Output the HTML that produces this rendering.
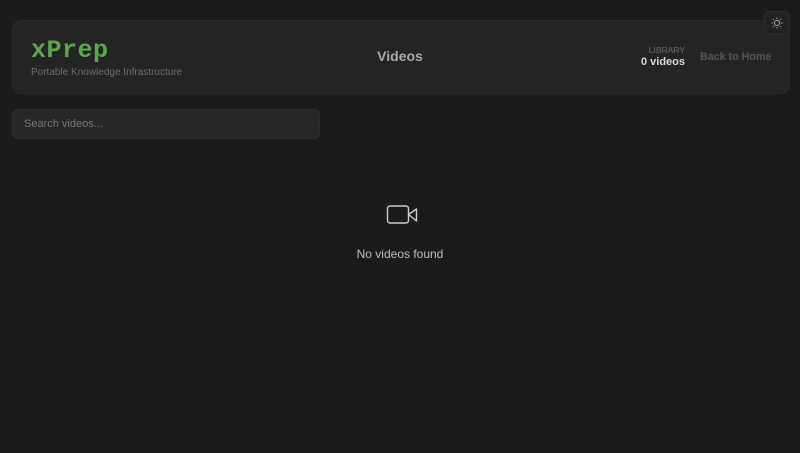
<!DOCTYPE html>
<html><head><style>
body{margin:0;width:800px;height:453px;background:#1b1b1b;font-family:"Liberation Sans",sans-serif;position:relative;overflow:hidden}
.card{position:absolute;left:12px;top:20px;width:776px;height:72px;background:#242424;border:1px solid #2c2c2c;border-radius:10px}
.logo{position:absolute;left:31px;top:36px;font-family:"Liberation Mono",monospace;font-size:25px;color:#5ea54f;letter-spacing:0.5px;font-weight:bold}
.sub{position:absolute;left:31px;top:67px;font-size:10px;color:#6e6e6e}
.title{position:absolute;left:0;width:800px;text-align:center;top:48px;font-size:14px;font-weight:bold;color:#a8a8a8}
.lib{position:absolute;left:632px;width:53px;text-align:right;top:45px;font-size:8.5px;color:#6a6a6a}
.cnt{position:absolute;left:620px;width:65px;text-align:right;top:56px;font-size:11px;font-weight:bold;color:#d8d8d8}
.back{position:absolute;left:700px;top:51px;font-size:10.7px;font-weight:bold;color:#555}
.theme{position:absolute;left:764px;top:11px;width:26px;height:24px;background:#222;border:1px solid #2e2e2e;border-radius:6px;box-sizing:border-box}
.search{position:absolute;left:12px;top:109px;width:308px;height:30px;background:#272727;border:1px solid #2e2e2e;border-radius:6px;box-sizing:border-box;font-size:11px;color:#777;padding:8px 0 0 11px}
.empty{position:absolute;left:0;width:800px;text-align:center;top:247px;font-size:12px;color:#bdbdbd}
</style></head><body>
<div class="card"></div>
<div class="logo">xPrep</div>
<div class="sub">Portable Knowledge Infrastructure</div>
<div class="title">Videos</div>
<div class="lib">LIBRARY</div>
<div class="cnt">0 videos</div>
<div class="back">Back to Home</div>
<div class="theme"><svg width="24" height="22" viewBox="0 0 24 22" style="position:absolute;left:0;top:0"><g stroke="#aaa" stroke-width="1" fill="none"><circle cx="12" cy="11" r="2.5"/><path d="M12 5.5v1.5M12 15v1.5M6.5 11H8M16 11h1.5M8.1 7.1l1 1M14.9 13.9l1 1M8.1 14.9l1-1M14.9 8.1l1-1"/></g></svg></div>
<div class="search">Search videos...</div>
<svg style="position:absolute;left:385px;top:202px" width="34" height="26" viewBox="0 0 34 26"><g stroke="#ccc" stroke-width="1.4" fill="none" stroke-linejoin="round"><rect x="2.5" y="4" width="21" height="17" rx="2.5"/><path d="M23.5 12.5L31.5 7v12z"/></g></svg>
<div class="empty">No videos found</div>
</body></html>
